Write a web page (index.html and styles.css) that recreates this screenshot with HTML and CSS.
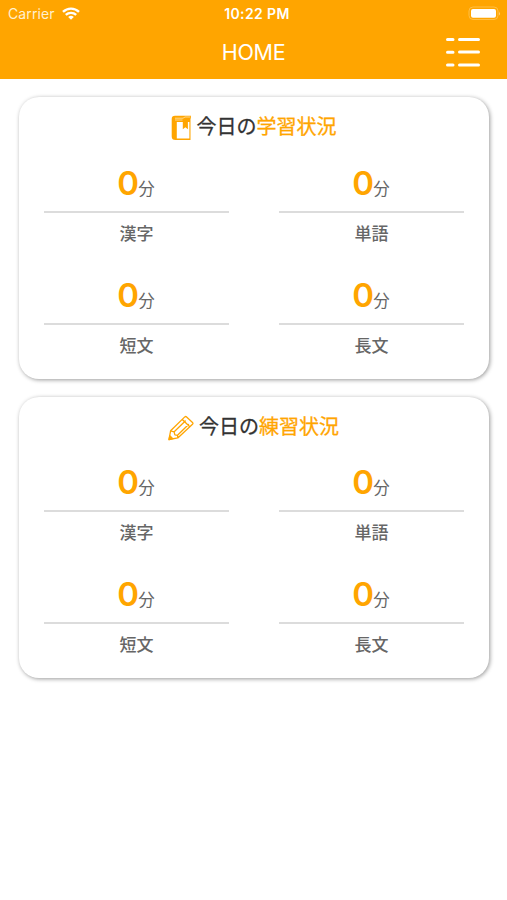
FILE: index.html
```html
<!DOCTYPE html>
<html lang="ja">
<head>
<meta charset="utf-8">
<title>HOME</title>
<link rel="stylesheet" href="styles.css">
</head>
<body>
<header class="header">
  <div class="status">
    <div class="carrier">
      <span>Carrier</span>
      <svg class="wifi" width="18" height="13" viewBox="0 0 18 13" fill="none" stroke="#fff" stroke-width="2.4">
        <path d="M1 4.800C5.500.5 12.500.5 17 4.800M3.800 7.900c3-2.700 7.400-2.700 10.400 0"/>
        <path d="M6.200 9.900Q9 7.700 11.800 9.900L9 12.800Z" fill="#fff" stroke="none"/>
      </svg>
    </div>
    <div class="time">10:22 PM</div>
    <svg class="battery" width="33" height="15" viewBox="0 0 33 15">
      <rect x="1" y="1" width="29" height="12.500" rx="4" fill="none" stroke="#ffbf45" stroke-width="1"/>
      <rect x="3" y="3" width="25" height="8.800" rx="2" fill="#fff"/>
      <path d="M31 5.500q1.800 2 0 4z" fill="#ffd17a"/>
    </svg>
  </div>
  <div class="navbar">
    <span></span>
    <h1 class="title">HOME</h1>
    <svg class="menu" width="36" height="32" viewBox="0 0 36 32" stroke="#fff" stroke-width="3" stroke-linecap="round">
      <path d="M2.500 3.500h5.500M14.500 3.500h19M2.500 16.300h5.500M14.500 16h19M2.500 29h5.500M14.500 29h19"/>
    </svg>
  </div>
</header>
<main class="content">
  <section class="card">
    <h2 class="heading">
      <svg class="icon-book" width="21" height="26" viewBox="0 0 21 26">
        <path d="M4 .8h16v2.200l-.5.800V25H4.500Q.7 25 .7 21.500V4Q.7.8 4 .8Z" fill="#ffa500"/>
        <path d="M5.800 7H11.800v7.200l2.600-2 2.500 2V7h1.500v16.500H5.800Z" fill="#fff"/>
        <path d="M4 3.200h8l2-1.200h5.500M4 5h7.500" stroke="#ffdf9c" stroke-width=".9" fill="none"/>
      </svg>
      <span class="heading-text">今日の<span class="accent">学習状況</span></span>
    </h2>
    <div class="grid">
      <div class="cell"><div class="value"><b>0</b><span>分</span></div><div class="label">漢字</div></div>
      <div class="cell"><div class="value"><b>0</b><span>分</span></div><div class="label">単語</div></div>
      <div class="cell"><div class="value"><b>0</b><span>分</span></div><div class="label">短文</div></div>
      <div class="cell"><div class="value"><b>0</b><span>分</span></div><div class="label">長文</div></div>
    </div>
  </section>
  <section class="card">
    <h2 class="heading">
      <svg class="icon-pencil" width="26" height="26" viewBox="0 0 26 26" fill="none" stroke="#ffa500" stroke-width="1.300" stroke-linejoin="round" stroke-linecap="round">
        <path d="M1 24.500l1.600-8.700L16.800 1.900q.9-.8 1.800 0l5.900 5.500q.9.900 0 1.800L9.800 22.900ZM2.600 15.800l3.500 1 .8 3 2.600.5.300 2.600M14.300 4.500l7.500 7.300M6.200 16.700L17.300 6M9.500 20.300L20.500 9.500"/>
        <path d="M1 24.500l.8-3.700L4.800 23.700Z" fill="#ffa500"/>
      </svg>
      <span class="heading-text">今日の<span class="accent">練習状況</span></span>
    </h2>
    <div class="grid">
      <div class="cell"><div class="value"><b>0</b><span>分</span></div><div class="label">漢字</div></div>
      <div class="cell"><div class="value"><b>0</b><span>分</span></div><div class="label">単語</div></div>
      <div class="cell"><div class="value"><b>0</b><span>分</span></div><div class="label">短文</div></div>
      <div class="cell"><div class="value"><b>0</b><span>分</span></div><div class="label">長文</div></div>
    </div>
  </section>
</main>
</body>
</html>
```
FILE: styles.css
```css
* { box-sizing: border-box; }
body {
  margin: 0;
  min-height: 100vh;
  background: #fff;
  font-family: Inter, "Noto Sans CJK JP", sans-serif;
}
.header {
  height: 79px;
  background: #ffa500;
  color: #fff;
}
.status {
  height: 27px;
  padding: 0 6px 0 8px;
  display: grid;
  grid-template-columns: 1fr auto 1fr;
  align-items: center;
}
.carrier {
  display: flex;
  align-items: center;
  gap: 7px;
  font-size: 14px;
  letter-spacing: 0.1px;
  color: #fff0d0;
}
.time {
  margin-left: 5px;
  font-size: 14px;
  font-weight: 600;
  letter-spacing: 0.4px;
}
.battery { justify-self: end; }
.navbar {
  height: 50px;
  padding: 0 26px;
  display: grid;
  grid-template-columns: 1fr auto 1fr;
  align-items: center;
}
.title {
  margin: 0;
  font-size: 21.500px;
  font-weight: 400;
  letter-spacing: -0.3px;
}
.menu { justify-self: end; }
.content {
  padding: 18px 18px 24px 19px;
  display: flex;
  flex-direction: column;
  gap: 18px;
}
.card {
  height: 281.500px;
  padding-top: 14px;
  border-radius: 20px;
  background: #fff;
  box-shadow: 1px 1px 4px rgba(0, 0, 0, .4);
}
.heading {
  margin: 0;
  height: 32px;
  padding-right: 1px;
  display: flex;
  align-items: center;
  justify-content: center;
  gap: 5px;
  font-size: 20px;
  font-weight: 400;
  line-height: 32px;
  color: #333;
}
.icon-book, .icon-pencil { margin-top: 2px; }
.heading-text { -webkit-text-stroke: 0.3px currentColor; }
.accent { color: #ffa500; }
.grid {
  display: grid;
  grid-template-columns: 1fr 1fr;
  grid-auto-rows: 112px;
}
.cell {
  padding: 17.500px 25px 0;
  text-align: center;
  color: #666;
}
.value {
  height: 52px;
  padding-right: 1px;
  border-bottom: 2px solid #dcdcdc;
  display: flex;
  justify-content: center;
  align-items: baseline;
  line-height: 44px;
}
.value b {
  font-size: 33px;
  font-weight: 600;
  letter-spacing: -1px;
  color: #ffa500;
}
.value span { font-size: 16.500px; }
.label {
  font-size: 17px;
  font-weight: 500;
  line-height: 24px;
  margin-top: 9px;
}
```
